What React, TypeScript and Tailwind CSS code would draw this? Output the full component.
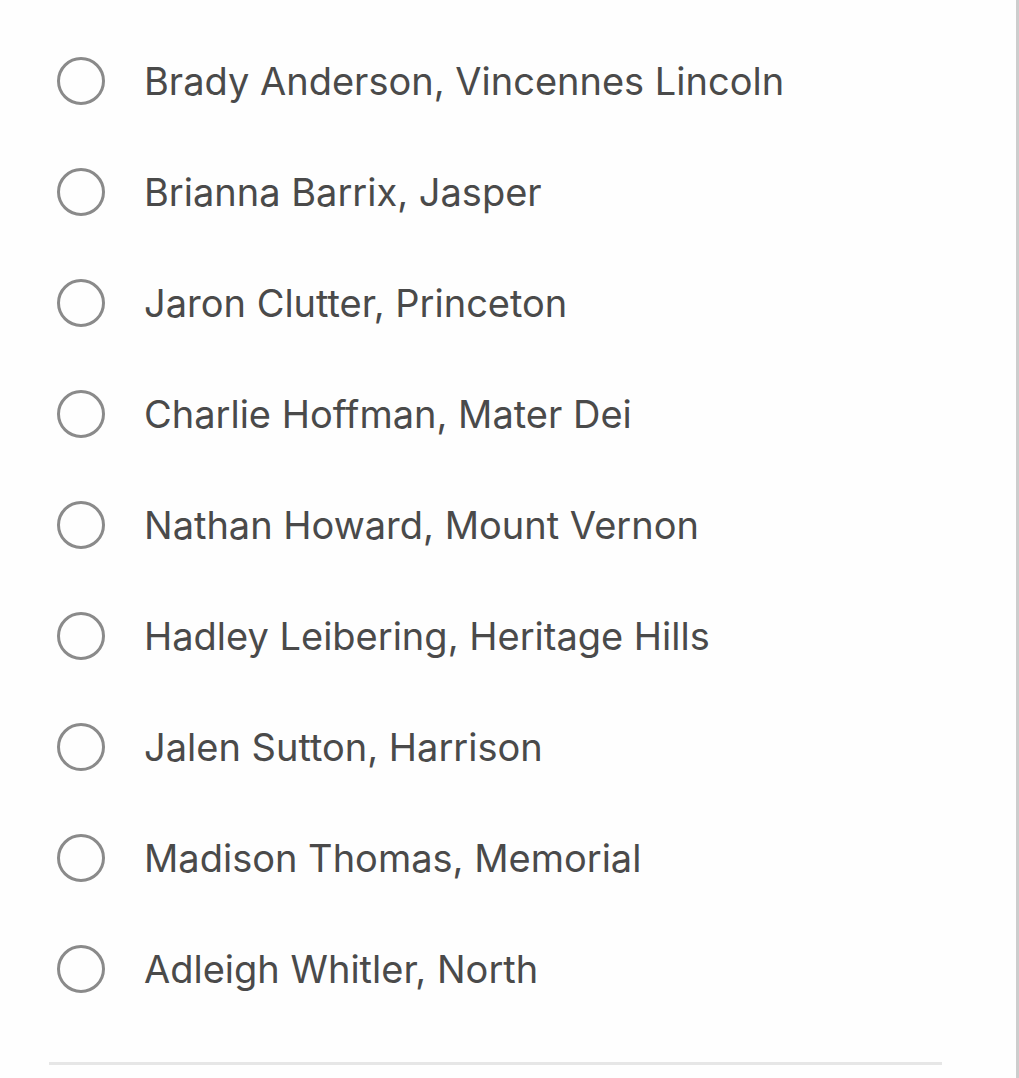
const entries = [
  "Brady Anderson, Vincennes Lincoln",
  "Brianna Barrix, Jasper",
  "Jaron Clutter, Princeton",
  "Charlie Hoffman, Mater Dei",
  "Nathan Howard, Mount Vernon",
  "Hadley Leibering, Heritage Hills",
  "Jalen Sutton, Harrison",
  "Madison Thomas, Memorial",
  "Adleigh Whitler, North",
];

export default function App() {
  return (
    <div className="flex h-[1078px] w-[1019px] overflow-hidden bg-[#fefefe]" style={{ fontFamily: "Inter, 'Noto Sans', sans-serif" }}>
      <div className="flex-1">
        <div className="pt-[25px]">
          {entries.map((name) => (
            <label key={name} className="flex h-[111px] items-center pl-[57px]">
              <span className="h-[48px] w-[48px] shrink-0 rounded-full border-[3.5px] border-[#8a8a8a]" />
              <span className="ml-[39px] text-[38px] leading-none text-[#4a4a4a]">{name}</span>
            </label>
          ))}
        </div>
        <div className="ml-[49px] mt-[38px] h-[3px] w-[893px] bg-[#e6e6e6]" />
      </div>
      <div className="w-[3px] bg-[#cdcdcd]" />
    </div>
  );
}
